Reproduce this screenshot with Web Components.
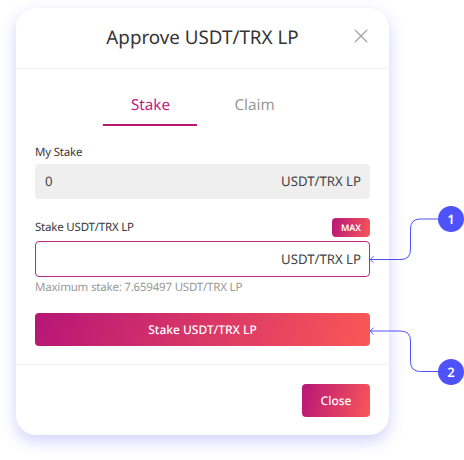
<!DOCTYPE html>
<html lang="en">
<head>
<meta charset="utf-8">
<title>Approve USDT/TRX LP</title>
<style>
html, body { margin: 0; background: #fff; }
body { width: 464px; height: 460px; overflow: hidden; position: relative; font-family: "Noto Sans", "Open Sans", sans-serif; color: #3b3b3b; text-rendering: geometricPrecision; }
</style>
</head>
<body>
<stake-dialog></stake-dialog>
<step-callout number="1" style="top:205px"></step-callout>
<step-callout number="2" up style="top:325px"></step-callout>
<script>
const define = (name, html, setup) => customElements.define(name, class extends HTMLElement {
  connectedCallback() {
    if (this.shadowRoot) return;
    const root = this.attachShadow({ mode: 'open' });
    const t = document.createElement('template');
    t.innerHTML = html;
    root.append(t.content.cloneNode(true));
    if (setup) setup(this, root);
  }
});

define('gradient-button', `<style>
:host { display: flex; align-items: center; justify-content: center; box-sizing: border-box; border-radius: 4px; color: #fff; font-weight: 500; white-space: nowrap; background: linear-gradient(106deg, #b71677, #fa5757); cursor: pointer; }
</style><slot></slot>`);

define('tab-item', `<style>
:host { display: block; box-sizing: border-box; width: 94px; height: 38px; padding-left: 1px; text-align: center; font-size: 15.2px; line-height: 35px; color: #999; }
:host([active]) { color: #bd2180; border-bottom: 2px solid #b71677; }
</style><slot></slot>`);

define('amount-field', `<style>
:host { display: flex; box-sizing: border-box; height: 35px; align-items: center; justify-content: space-between; padding: 0 9px 1px 10px; border-radius: 4px; background: #efefef; font-size: 13.2px; line-height: 20px; color: #444; }
:host([editable]) { background: #fff; border: 1px solid #bd2584; padding: 0 8px 0 9px; height: 36px; }
</style><span><slot></slot></span><span><slot name="unit"></slot></span>`);

define('stake-dialog', `<style>
:host { display: flex; flex-direction: column; box-sizing: border-box; width: 373px; height: 427px; margin: 8px 0 0 16px; border-radius: 20px; background: #fff; box-shadow: 0 6px 16px rgba(78,78,246,.26); }
header { box-sizing: border-box; height: 61px; border-bottom: 1px solid #f1f1f1; display: grid; grid-template-columns: 36px 1fr 36px; align-items: center; padding-bottom: 2px; }
h1 { grid-column: 2; margin: 0; font-weight: 400; font-size: 18.8px; text-align: center; line-height: 26px; white-space: nowrap; color: #363636; }
header svg { width: 14px; height: 14px; margin: 0 0 2px 1px; }
nav { display: flex; justify-content: center; gap: 10px; padding: 19px 1px 0 0; }
main { padding: 0 19px; flex: 1; display: flex; flex-direction: column; }
.label { height: 20px; line-height: 20px; font-size: 11.5px; letter-spacing: -.2px; color: #393939; display: flex; align-items: center; justify-content: space-between; }
.first { margin: 17px 0 1px; }
.second { margin: 18px 0 4px; }
.second span { padding-top: 2px; }
.max { width: 38px; height: 19px; font-size: 9px; font-weight: 600; line-height: 19px; letter-spacing: 0; }
.hint { font-size: 11.5px; letter-spacing: -.2px; line-height: 20px; height: 20px; color: #999; margin-bottom: 15px; margin-top: 1px; }
.submit { height: 33px; font-size: 12px; }
footer { box-sizing: border-box; height: 71px; border-top: 1px solid #f1f1f1; display: flex; justify-content: flex-end; align-items: flex-start; padding: 19px 19px 0; }
.close { width: 68px; height: 33px; font-size: 12px; }
</style>
<header><h1>Approve USDT/TRX LP</h1><svg viewBox="0 0 14 14" fill="none" stroke="#aaa" stroke-width="1.5" stroke-linecap="round"><path d="M1.3 1.3 12.7 12.7M12.7 1.3 1.3 12.7"/></svg></header>
<nav><tab-item active>Stake</tab-item><tab-item>Claim</tab-item></nav>
<main>
<div class="label first">My Stake</div>
<amount-field>0<span slot="unit">USDT/TRX LP</span></amount-field>
<div class="label second"><span>Stake USDT/TRX LP</span><gradient-button class="max">MAX</gradient-button></div>
<amount-field editable><span slot="unit">USDT/TRX LP</span></amount-field>
<div class="hint">Maximum stake: 7.659497 USDT/TRX LP</div>
<gradient-button class="submit">Stake USDT/TRX LP</gradient-button>
</main>
<footer><gradient-button class="close">Close</gradient-button></footer>`);

define('step-callout', `<style>
:host { display: block; position: absolute; left: 369px; width: 95px; height: 61px; }
svg { display: block; width: 95px; height: 61px; }
text { font: 600 13px "Noto Sans", sans-serif; fill: #fff; }
</style>
<svg viewBox="0 0 95 61"><g id="line" fill="none" stroke="#4e52fa" stroke-width="1"><path d="M1 54.5H32Q41.5 54.5 41.5 44V24Q41.5 14 51.5 14H70"/><path d="M4.5 51.2 1.2 54.5 4.5 57.8"/></g><circle cx="82" cy="14" r="13" fill="#4e52fa"/><text x="82" y="18.6" text-anchor="middle"></text></svg>`,
(el, root) => {
  root.querySelector('text').textContent = el.getAttribute('number');
  if (el.hasAttribute('up')) {
    root.querySelector('#line').innerHTML = '<path d="M1 6H31.5Q41.5 6 41.5 16V36.5Q41.5 46.5 51.5 46.5H70"/><path d="M4.5 2.7 1.2 6 4.5 9.3"/>';
    root.querySelector('circle').setAttribute('cy', 47);
    root.querySelector('text').setAttribute('y', 51.6);
  }
});
</script>
</body>
</html>
